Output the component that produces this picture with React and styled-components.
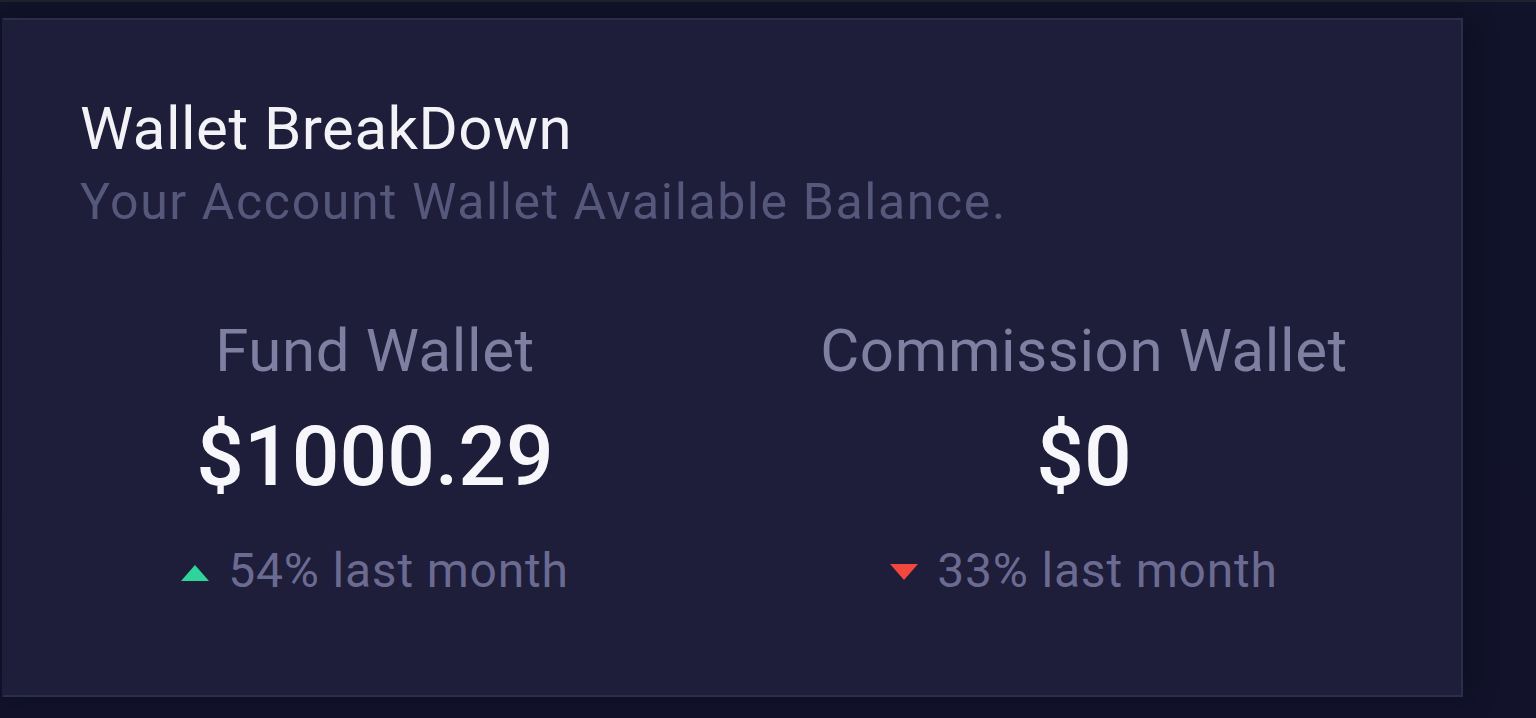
import React from "react";
import styled, { createGlobalStyle } from "styled-components";

const GlobalStyle = createGlobalStyle`
  html, body {
    margin: 0;
    padding: 0;
    background: #12132a;
  }
  body {
    font-family: Roboto, "Noto Sans", "Liberation Sans", sans-serif;
    -webkit-font-smoothing: antialiased;
  }
`;

const Page = styled.div`
  width: 1536px;
  height: 718px;
  box-sizing: border-box;
  padding: 18px 0 0 2px;
  background: linear-gradient(#20222f 0, #20222f 2px, #11132a 2px, #12132b 100%);
  overflow: hidden;
`;

const Card = styled.section`
  width: 1461px;
  height: 679px;
  box-sizing: border-box;
  background: #1e1d3a;
  border: 2px solid #2d2d4a;
  border-left-color: #1e1d3a;
  padding: 73px 80px 0 76px;
  box-shadow: 6px 0 24px rgba(6, 8, 20, 0.45);
`;

const Title = styled.h2`
  margin: 0;
  font-size: 60px;
  line-height: 72px;
  font-weight: 400;
  letter-spacing: 0.5px;
  color: #f2f2f7;
`;

const Subtitle = styled.p`
  margin: 7px 0 0;
  font-size: 50px;
  line-height: 60px;
  font-weight: 400;
  letter-spacing: 1.6px;
  color: #56587b;
`;

const Stats = styled.div`
  display: grid;
  grid-template-columns: 590px 590px;
  column-gap: 119px;
  margin-top: 83px;
`;

const Stat = styled.div`
  display: flex;
  flex-direction: column;
  align-items: center;
`;

const StatLabel = styled.div`
  font-size: 60px;
  line-height: 72px;
  letter-spacing: 0.6px;
  color: #7f7fa2;
  white-space: nowrap;
`;

const Amount = styled.div`
  margin-top: 20px;
  font-size: 84px;
  line-height: 100.8px;
  font-weight: 500;
  color: #f7f7fb;
`;

const Change = styled.div`
  margin-top: 34px;
  display: flex;
  align-items: center;
  gap: 19px;
  font-size: 48px;
  line-height: 57.6px;
  letter-spacing: 0.8px;
  color: #6b6b92;
  white-space: nowrap;
`;

const Arrow = styled.svg`
  width: 28px;
  height: 16px;
  flex: none;
  margin-top: ${(p) => (p.$up ? "4px" : "2px")};
`;

function Trend({ up, children }) {
  return (
    <Change>
      <Arrow $up={up} viewBox="0 0 28 16">
        {up ? (
          <path d="M14 0 L28 16 L0 16 Z" fill="#2fd39c" />
        ) : (
          <path d="M0 0 L28 0 L14 16 Z" fill="#f2473d" />
        )}
      </Arrow>
      <span>{children}</span>
    </Change>
  );
}

export default function App() {
  return (
    <>
      <GlobalStyle />
      <Page>
        <Card>
          <Title>Wallet BreakDown</Title>
          <Subtitle>Your Account Wallet Available Balance.</Subtitle>
          <Stats>
            <Stat>
              <StatLabel>Fund Wallet</StatLabel>
              <Amount>$1000.29</Amount>
              <Trend up>54% last month</Trend>
            </Stat>
            <Stat>
              <StatLabel>Commission Wallet</StatLabel>
              <Amount>$0</Amount>
              <Trend>33% last month</Trend>
            </Stat>
          </Stats>
        </Card>
      </Page>
    </>
  );
}
